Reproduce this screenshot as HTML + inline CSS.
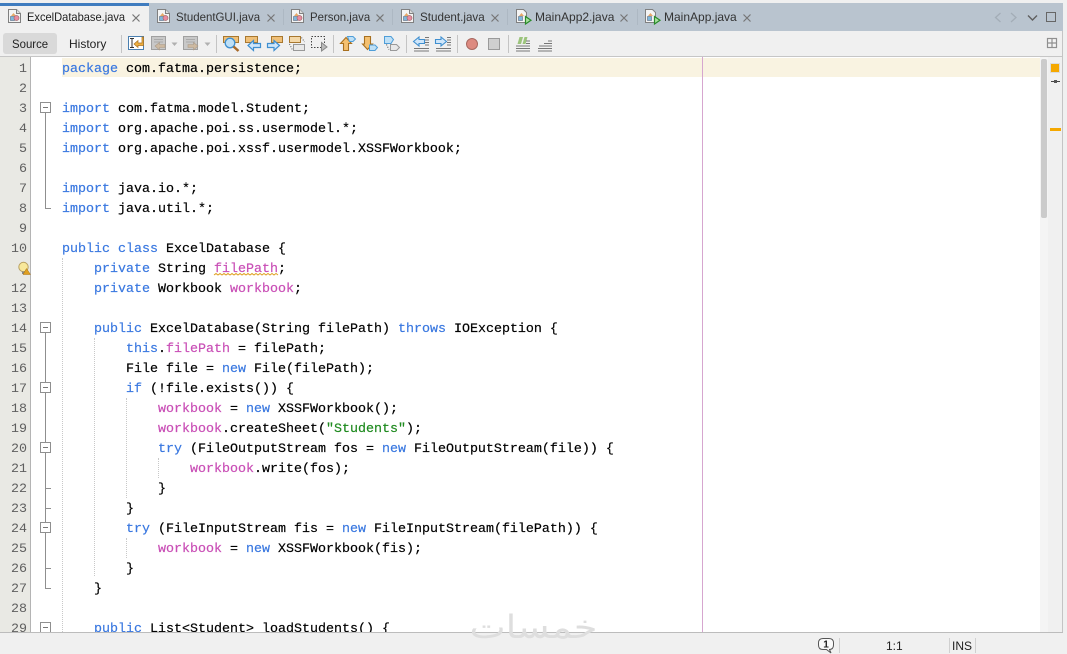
<!DOCTYPE html>
<html><head><meta charset="utf-8">
<style>
html,body{margin:0;padding:0;width:1067px;height:654px;overflow:hidden;background:#f0f0f0}
body{position:relative;font-family:"Liberation Sans",sans-serif}
.a{position:absolute}
.t{position:absolute;top:9px;font-size:12px;line-height:16px;color:#333;white-space:nowrap;transform-origin:0 50%}
.ln{position:absolute;left:0;margin-top:2px;width:27px;text-align:right;font:13.33px/20px "Liberation Mono",monospace;color:#5f5f5f}
.c{position:absolute;left:62px;margin-top:2px;font:13.33px/20px "Liberation Mono",monospace;color:#000;white-space:pre;-webkit-text-stroke:.2px currentColor}
.k{color:#3a78e0}.f{color:#c94fb6}.s{color:#1f8a1f}
.sep{position:absolute;width:1px;top:35px;height:18px;background:#c4c4c4}
.tsep{position:absolute;width:1px;top:9px;height:16px;background:#adb8c3}
.box{position:absolute;left:40px;width:9px;height:9px;border:1px solid #8f8f8f;background:#fff}
.box:after{content:"";position:absolute;left:2px;top:4px;width:5px;height:1px;background:#777}
.tick{position:absolute;left:45px;width:6px;height:1px;background:#8f8f8f}
.dot{position:absolute;width:0;border-left:1px dotted #c8c8c8}
svg{position:absolute;overflow:visible}
</style></head><body>
<svg width="0" height="0" style="position:absolute"><defs>
<g id="ji"><path d="M.5.5H8.500L12.500 4.500V13.500H.5Z" fill="#f4f4f4" stroke="#808080"/><path d="M8.500.5V4.500H12.500" fill="#ddd" stroke="#808080"/><path d="M3 7l2.500-3 2.500 3z" fill="#e6a868"/><rect x="2.500" y="7.500" width="4" height="4" fill="#7fb8dc" stroke="#6a7a90" stroke-width=".7"/><circle cx="8.500" cy="9" r="2.500" fill="#ea8ca0" stroke="#a56a70" stroke-width=".7"/></g>
<g id="jm"><path d="M.5.5H7.500L10.500 3.500V13.500H.5Z" fill="#f4f4f4" stroke="#808080"/><path d="M3 7l2.500-3 2.500 3z" fill="#e6a868"/><rect x="2.500" y="7.500" width="4" height="4" fill="#7fb8dc" stroke="#6a7a90" stroke-width=".7"/><path d="M9.500 7.500V15L15 11.200Z" fill="#a8e0a0" stroke="#2a8a2a" stroke-width="1.200"/></g>
<g id="x"><path d="M.5.5L7.500 7.500M7.500.5L.5 7.500" stroke="#767676" stroke-width="1.200" fill="none"/></g>
<g id="lines"><path d="M0 13.500H15M0 16H15" stroke="#777"/></g>
</defs></svg>

<!-- tab bar -->
<div class="a" style="left:0;top:3px;width:1063px;height:28px;background:#b9c4cf"></div>
<div class="a" style="left:0;top:3px;width:149px;height:28px;background:#f0f0f0"></div>
<div class="a" style="left:0;top:3px;width:149px;height:3px;background:#3f7cbf"></div>

<svg style="left:8px;top:9px" width="15" height="16"><use href="#ji"/></svg>
<div class="t" style="left:27px;color:#222;transform:scaleX(.925)">ExcelDatabase.java</div>
<svg style="left:132px;top:14px" width="10" height="10"><use href="#x"/></svg>

<svg style="left:157px;top:9px" width="15" height="16"><use href="#ji"/></svg>
<div class="t" style="left:176px;transform:scaleX(.955)">StudentGUI.java</div>
<svg style="left:267px;top:14px" width="10" height="10"><use href="#x"/></svg>
<div class="tsep" style="left:283px"></div>

<svg style="left:291px;top:9px" width="15" height="16"><use href="#ji"/></svg>
<div class="t" style="left:310px;transform:scaleX(.95)">Person.java</div>
<svg style="left:376px;top:14px" width="10" height="10"><use href="#x"/></svg>
<div class="tsep" style="left:392px"></div>

<svg style="left:401px;top:9px" width="15" height="16"><use href="#ji"/></svg>
<div class="t" style="left:420px;transform:scaleX(.97)">Student.java</div>
<svg style="left:491px;top:14px" width="10" height="10"><use href="#x"/></svg>
<div class="tsep" style="left:507px"></div>

<svg style="left:516px;top:9px" width="18" height="16"><use href="#jm"/></svg>
<div class="t" style="left:535px">MainApp2.java</div>
<svg style="left:620px;top:14px" width="10" height="10"><use href="#x"/></svg>
<div class="tsep" style="left:637px"></div>

<svg style="left:645px;top:9px" width="18" height="16"><use href="#jm"/></svg>
<div class="t" style="left:664px">MainApp.java</div>
<svg style="left:743px;top:14px" width="10" height="10"><use href="#x"/></svg>

<svg style="left:990px;top:10px" width="70" height="16" fill="none">
<path d="M10.500 3L5.500 7.500 10.500 12" stroke="#a3adb7" stroke-width="1.300"/>
<path d="M21 3L26 7.500 21 12" stroke="#a3adb7" stroke-width="1.300"/>
<path d="M38 5.500L42.500 10 47 5.500" stroke="#5f5f5f" stroke-width="1.400"/>
</svg>
<div class="a" style="left:1046px;top:12px;width:8px;height:8px;border:1.500px solid #666"></div>

<!-- toolbar -->
<div class="a" style="left:0;top:31px;width:1062px;height:25px;background:#f0f0f0"></div>
<div class="a" style="left:0;top:56px;width:1062px;height:1px;background:#c6c6c6"></div>
<div class="a" style="left:3px;top:33px;width:54px;height:21px;background:#d9d9d9;border-radius:3px"></div>
<div class="t" style="left:12px;top:36px;color:#222;transform:scaleX(.95)">Source</div>
<div class="t" style="left:69px;top:36px;color:#222">History</div>
<div class="sep" style="left:121px"></div>
<div class="sep" style="left:216px"></div>
<div class="sep" style="left:333px"></div>
<div class="sep" style="left:406px"></div>
<div class="sep" style="left:457px"></div>
<div class="sep" style="left:508px"></div>

<svg style="left:128px;top:36px" width="16" height="15"><rect x=".5" y=".5" width="15" height="13" fill="#fff" stroke="#4a7fb0"/><path d="M2 2.500H6M4 2.500V11.500M2 11.500H6" stroke="#333" fill="none"/><path d="M14 1V7H10V4.500L6 8 10 11.500V9.500H15.500V1Z" fill="#f0b040" stroke="#a87020" stroke-width=".7"/></svg>
<svg style="left:151px;top:36px" width="30" height="16"><rect x=".5" y=".5" width="14" height="13" fill="#c8c8c8" stroke="#a0a0a0"/><path d="M3 3.500H12M3 6H12" stroke="#aaa"/><path d="M4 10L8.500 6.500V8.500H14V11.500H8.500V14Z" fill="#cdb9a0" stroke="#aa9a88" stroke-width=".6"/><path d="M20.500 6.500H26.500L23.500 10Z" fill="#b0b0b0"/></svg>
<svg style="left:183px;top:36px" width="30" height="16"><rect x=".5" y=".5" width="14" height="13" fill="#c8c8c8" stroke="#a0a0a0"/><path d="M3 3.500H12M3 6H12" stroke="#aaa"/><path d="M15 10L10.500 6.500V8.500H5V11.500H10.500V14Z" fill="#cdb9a0" stroke="#aa9a88" stroke-width=".6"/><path d="M21.500 6.500H27.500L24.500 10Z" fill="#b0b0b0"/></svg>

<svg style="left:223px;top:36px" width="17" height="16"><rect x=".5" y=".5" width="15" height="6" fill="#f0c078" stroke="#a87830"/><circle cx="7" cy="7" r="4.800" fill="#bfe0f6" stroke="#3f8fd0" stroke-width="1.300"/><path d="M10.500 10.500L15.500 15" stroke="#a86a2a" stroke-width="2.500"/></svg>
<svg style="left:245px;top:36px" width="17" height="16"><rect x=".5" y=".5" width="12" height="6" fill="#f0c078" stroke="#a87830"/><path d="M3 9.500L8.500 4.500V7.500H15.500V11.500H8.500V14.500Z" fill="#cfe6fa" stroke="#3f8fd0" stroke-width="1.200"/></svg>
<svg style="left:267px;top:36px" width="17" height="16"><rect x="4.500" y=".5" width="11" height="6" fill="#f0c078" stroke="#a87830"/><path d="M12.500 9.500L7 4.500V7.500H.5V11.500H7V14.500Z" fill="#cfe6fa" stroke="#3f8fd0" stroke-width="1.200"/></svg>
<svg style="left:289px;top:36px" width="17" height="16"><rect x=".5" y=".5" width="11" height="6" fill="#f4d8a8" stroke="#a87830"/><rect x="4.500" y="8.500" width="11" height="6" fill="#e8e8e8" stroke="#999"/><path d="M12.500 1.500L15.500 6M.5 8L3.500 14" stroke="#555" stroke-dasharray="1 1.500" fill="none"/></svg>
<svg style="left:311px;top:36px" width="17" height="16"><rect x=".5" y=".5" width="13" height="11" fill="none" stroke="#444" stroke-dasharray="1.500 1.500"/><path d="M10.500 6.500L16 11 10.500 15Z" fill="#bbb" stroke="#888"/></svg>

<svg style="left:340px;top:36px" width="17" height="16"><path d="M6 1.500L.5 7.500H3.500V14.500H8.500V7.500H11.500Z" fill="#f4c070" stroke="#a87020" stroke-width="1.100"/><path d="M7.500.5H13L15.500 3 13 5.500H9.500Z" fill="#bfe0f6" stroke="#4f9ed8"/></svg>
<svg style="left:362px;top:36px" width="17" height="16"><path d="M5.500 13.500L.5 8H2.500V.5H8.500V8H10.500Z" fill="#f4c070" stroke="#a87020" stroke-width="1.100"/><path d="M7.500 9H13L15.500 11.500 13 14.500H7.500Z" fill="#bfe0f6" stroke="#4f9ed8"/></svg>
<svg style="left:384px;top:36px" width="17" height="16"><path d="M.5.5H7L9.500 3.500 7 7.500H.5Z" fill="#bfe0f6" stroke="#4f9ed8"/><path d="M6.500 8.500H12.500L15.500 11.500 12.500 14.500H6.500Z" fill="#e8e8e8" stroke="#999"/><path d="M2.500 8.500L5 13.500" stroke="#444" stroke-dasharray="1 1.500"/></svg>

<svg style="left:413px;top:36px" width="16" height="16"><path d="M.5 5.500L6 1V3.500H11.500V7.500H6V10Z" fill="#cfe6fa" stroke="#3f8fd0" stroke-width="1.100"/><path d="M12 1.500H16M12 4H16M12 6.500H16M12 9H16" stroke="#777"/><use href="#lines" transform="translate(1,-1)"/></svg>
<svg style="left:435px;top:36px" width="16" height="16"><path d="M11.500 5.500L6 1V3.500H.5V7.500H6V10Z" fill="#cfe6fa" stroke="#3f8fd0" stroke-width="1.100"/><path d="M12 1.500H16M12 4H16M12 6.500H16M12 9H16" stroke="#777"/><use href="#lines" transform="translate(1,-1)"/></svg>

<svg style="left:466px;top:38px" width="12" height="12"><circle cx="6" cy="6" r="5.500" fill="#dd8a80" stroke="#a86860"/></svg>
<div class="a" style="left:488px;top:38px;width:10px;height:10px;background:#cfcfcf;border:1px solid #9a9a9a"></div>

<svg style="left:516px;top:37px" width="16" height="16"><path d="M1.500 7L3.500 0H7L5 7ZM6.500 7L8.500 0H11.500L9.500 7Z" fill="#9cc47c"/><path d="M10 4H14M10 6.500H14M0 9H14" stroke="#777"/><path d="M0 11.500H14M0 14H14" stroke="#777"/></svg>
<svg style="left:538px;top:37px" width="16" height="16"><path d="M10 4H14M6 6.500H14M1 9H14" stroke="#777"/><path d="M0 11.500H14M0 14H14" stroke="#777"/></svg>

<svg style="left:1047px;top:38px" width="11" height="11"><rect x=".5" y=".5" width="9" height="9" fill="#f4f4f4" stroke="#909090" stroke-width="1.200"/><path d="M5 .5V9.500M.5 5H9.500" stroke="#909090" stroke-width="1.200"/></svg>

<!-- editor -->
<div class="a" style="left:0;top:57px;width:1062px;height:575px;background:#fff"></div>
<div class="a" style="left:0;top:57px;width:30px;height:575px;background:#e9e9e4"></div>
<div class="a" style="left:30px;top:57px;width:1px;height:575px;background:#b4b4b4"></div>
<div class="a" style="left:62px;top:58px;width:978px;height:19px;background:#f9f3e1"></div>
<div class="a" style="left:702px;top:57px;width:1px;height:575px;background:#d6a6cf"></div>

<div class="dot" style="left:62px;top:258px;height:374px"></div>
<div class="dot" style="left:94px;top:338px;height:238px"></div>
<div class="dot" style="left:126px;top:398px;height:100px"></div>
<div class="dot" style="left:126px;top:538px;height:20px"></div>
<div class="dot" style="left:158px;top:458px;height:20px"></div>

<div class="a" style="left:45px;top:112px;width:1px;height:97px;background:#8f8f8f"></div>
<div class="tick" style="top:208px"></div>
<div class="a" style="left:45px;top:332px;width:1px;height:257px;background:#8f8f8f"></div>
<div class="tick" style="top:488px"></div>
<div class="tick" style="top:508px"></div>
<div class="tick" style="top:568px"></div>
<div class="tick" style="top:588px"></div>
<div class="box" style="top:102px"></div>
<div class="box" style="top:322px"></div>
<div class="box" style="top:382px"></div>
<div class="box" style="top:442px"></div>
<div class="box" style="top:522px"></div>
<div class="box" style="top:622px"></div>

<div class="ln" style="top:58px">1</div><div class="ln" style="top:78px">2</div><div class="ln" style="top:98px">3</div><div class="ln" style="top:118px">4</div><div class="ln" style="top:138px">5</div><div class="ln" style="top:158px">6</div><div class="ln" style="top:178px">7</div><div class="ln" style="top:198px">8</div><div class="ln" style="top:218px">9</div><div class="ln" style="top:238px">10</div><div class="ln" style="top:278px">12</div><div class="ln" style="top:298px">13</div><div class="ln" style="top:318px">14</div><div class="ln" style="top:338px">15</div><div class="ln" style="top:358px">16</div><div class="ln" style="top:378px">17</div><div class="ln" style="top:398px">18</div><div class="ln" style="top:418px">19</div><div class="ln" style="top:438px">20</div><div class="ln" style="top:458px">21</div><div class="ln" style="top:478px">22</div><div class="ln" style="top:498px">23</div><div class="ln" style="top:518px">24</div><div class="ln" style="top:538px">25</div><div class="ln" style="top:558px">26</div><div class="ln" style="top:578px">27</div><div class="ln" style="top:598px">28</div><div class="ln" style="top:618px">29</div>

<svg style="left:18px;top:262px" width="13" height="13"><circle cx="5.500" cy="5" r="4.700" fill="#f8e89a" stroke="#b8a060"/><rect x="4" y="9.500" width="3" height="2.500" fill="#888"/><path d="M8.500 6.500L12.500 12.500H5Z" fill="#e0a020" stroke="#a87010" stroke-width=".5"/></svg>

<div class="c" style="top:58px"><span class="k">package</span> com.fatma.persistence;</div>
<div class="c" style="top:98px"><span class="k">import</span> com.fatma.model.Student;</div>
<div class="c" style="top:118px"><span class="k">import</span> org.apache.poi.ss.usermodel.*;</div>
<div class="c" style="top:138px"><span class="k">import</span> org.apache.poi.xssf.usermodel.XSSFWorkbook;</div>
<div class="c" style="top:178px"><span class="k">import</span> java.io.*;</div>
<div class="c" style="top:198px"><span class="k">import</span> java.util.*;</div>
<div class="c" style="top:238px"><span class="k">public class</span> ExcelDatabase {</div>
<div class="c" style="top:258px">    <span class="k">private</span> String <span class="f">filePath</span>;</div>
<svg style="left:214px;top:273px" width="66" height="3" fill="none"><path d="M0 2 L2 0.500 L4 2 L6 0.500 L8 2 L10 0.500 L12 2 L14 0.500 L16 2 L18 0.500 L20 2 L22 0.500 L24 2 L26 0.500 L28 2 L30 0.500 L32 2 L34 0.500 L36 2 L38 0.500 L40 2 L42 0.500 L44 2 L46 0.500 L48 2 L50 0.500 L52 2 L54 0.500 L56 2 L58 0.500 L60 2 L62 0.500 L64 2" stroke="#e0a020"/></svg>
<div class="c" style="top:278px">    <span class="k">private</span> Workbook <span class="f">workbook</span>;</div>
<div class="c" style="top:318px">    <span class="k">public</span> ExcelDatabase(String filePath) <span class="k">throws</span> IOException {</div>
<div class="c" style="top:338px">        <span class="k">this</span>.<span class="f">filePath</span> = filePath;</div>
<div class="c" style="top:358px">        File file = <span class="k">new</span> File(filePath);</div>
<div class="c" style="top:378px">        <span class="k">if</span> (!file.exists()) {</div>
<div class="c" style="top:398px">            <span class="f">workbook</span> = <span class="k">new</span> XSSFWorkbook();</div>
<div class="c" style="top:418px">            <span class="f">workbook</span>.createSheet(<span class="s">"Students"</span>);</div>
<div class="c" style="top:438px">            <span class="k">try</span> (FileOutputStream fos = <span class="k">new</span> FileOutputStream(file)) {</div>
<div class="c" style="top:458px">                <span class="f">workbook</span>.write(fos);</div>
<div class="c" style="top:478px">            }</div>
<div class="c" style="top:498px">        }</div>
<div class="c" style="top:518px">        <span class="k">try</span> (FileInputStream fis = <span class="k">new</span> FileInputStream(filePath)) {</div>
<div class="c" style="top:538px">            <span class="f">workbook</span> = <span class="k">new</span> XSSFWorkbook(fis);</div>
<div class="c" style="top:558px">        }</div>
<div class="c" style="top:578px">    }</div>
<div class="c" style="top:618px">    <span class="k">public</span> List&lt;Student&gt; loadStudents() {</div>

<!-- scrollbar and error stripe -->
<div class="a" style="left:1040px;top:57px;width:8px;height:575px;background:#f4f4f4"></div>
<div class="a" style="left:1041px;top:59px;width:6px;height:159px;background:#cbcbcb;border-radius:2px"></div>
<div class="a" style="left:1048px;top:57px;width:14px;height:575px;background:#f0f0f0"></div>
<div class="a" style="left:1062px;top:31px;width:1px;height:602px;background:#c4c4c4"></div>
<div class="a" style="left:1051px;top:64px;width:8px;height:8px;background:#f5a800;box-shadow:0 0 0 1px #dcdcdc"></div>
<div class="a" style="left:1051px;top:81px;width:9px;height:1px;background:#444"></div>
<div class="a" style="left:1054px;top:80px;width:3px;height:3px;background:#555"></div>
<div class="a" style="left:1050px;top:128px;width:11px;height:3px;background:#f5a800"></div>

<!-- status bar -->
<div class="a" style="left:0;top:633px;width:1067px;height:21px;background:#f0f0f0"></div>
<div class="a" style="left:0;top:632px;width:1063px;height:1px;background:#bcbcbc"></div>
<svg style="left:818px;top:638px" width="16" height="16"><path d="M5 .5H11Q15.500 .5 15.500 5V7Q15.500 11.500 11 11.500H11.500L13 15 8.500 11.500H5Q.5 11.500 .5 7V5Q.5 .5 5 .5Z" fill="#fafafa" stroke="#555"/><text x="8" y="9.500" text-anchor="middle" font-family="Liberation Sans" font-weight="bold" font-size="10" fill="#222">1</text></svg>
<div class="a" style="left:839px;top:638px;width:1px;height:15px;background:#d0d0d0"></div>
<div class="t" style="left:886px;top:638px;color:#222">1:1</div>
<div class="a" style="left:949px;top:638px;width:1px;height:15px;background:#d0d0d0"></div>
<div class="t" style="left:952px;top:638px;color:#222">INS</div>
<div class="a" style="left:975px;top:638px;width:1px;height:15px;background:#d0d0d0"></div>

<!-- watermark -->
<div class="a" dir="rtl" style="left:470px;top:605px;width:127px;text-align:center;font:32px/44px 'DejaVu Sans',sans-serif;color:#dedede;white-space:nowrap;transform:scaleX(1.2)">خمسات</div>
</body></html>
